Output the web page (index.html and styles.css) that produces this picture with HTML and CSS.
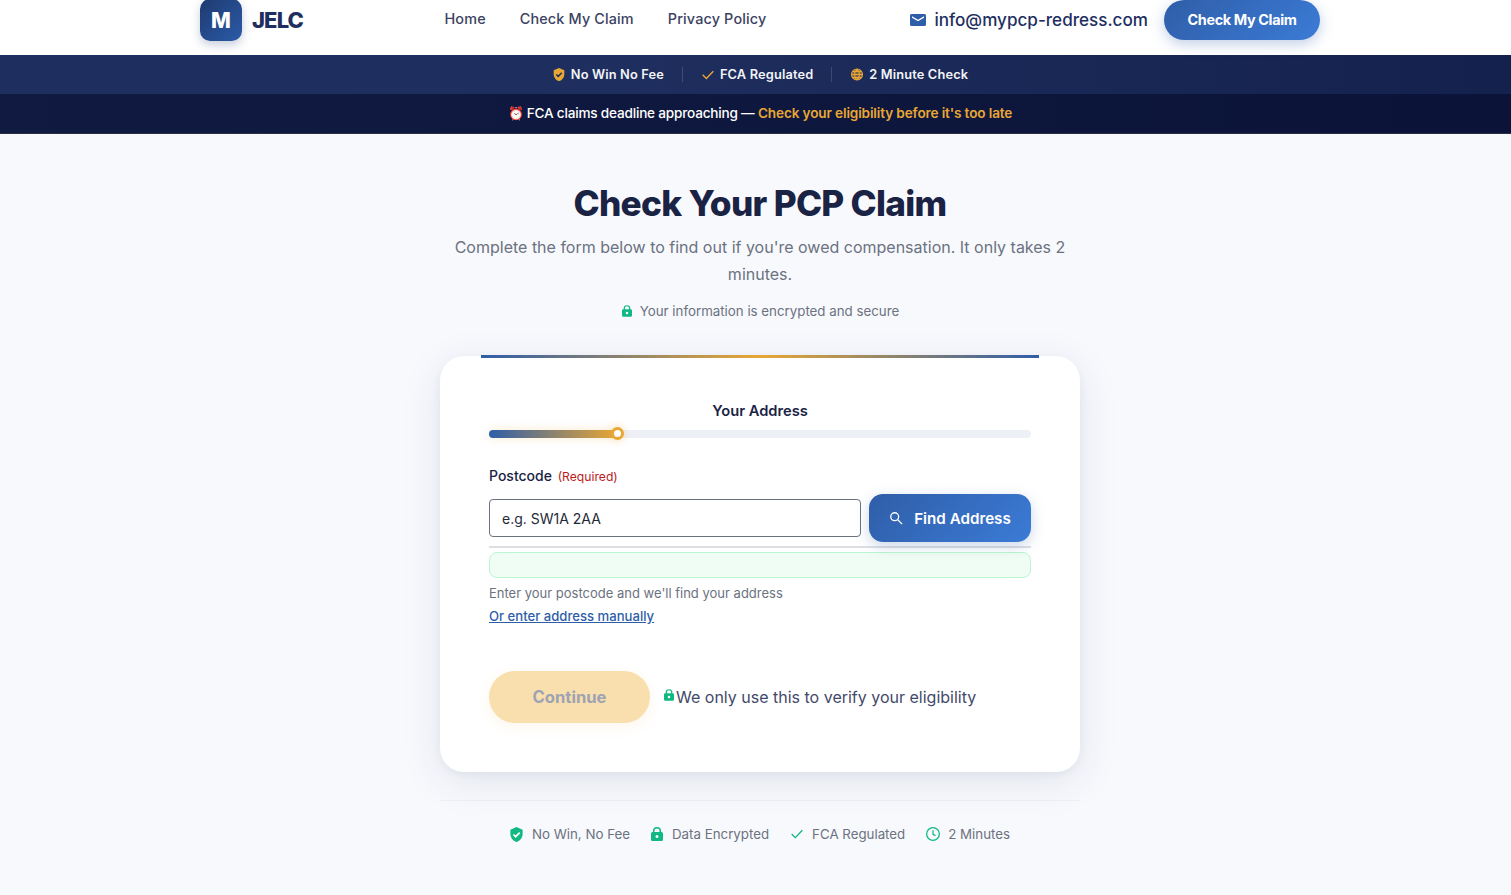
FILE: index.html

```html
<!DOCTYPE html>
<html lang="en">
<head>
  <meta charset="UTF-8">
  <title>Check Your PCP Claim</title>
  <link rel="stylesheet" href="styles.css">
</head>
<body>
  <header class="site-header">
    <div class="header-inner">
      <a class="brand" href="#">
        <span class="brand-mark">M</span>
        <span class="brand-name">JELC</span>
      </a>
      <nav class="main-nav">
        <a href="#">Home</a>
        <a href="#">Check My Claim</a>
        <a href="#">Privacy Policy</a>
      </nav>
      <div class="header-right">
        <a class="header-mail" href="#">
          <svg class="mail-icon" viewBox="0 0 16 12"><path d="M1.500 0h13A1.500 1.500 0 0 1 16 1.500v9a1.500 1.500 0 0 1-1.500 1.500h-13A1.500 1.500 0 0 1 0 10.500v-9A1.500 1.500 0 0 1 1.500 0zM2 2.200v1.500l6 3.600 6-3.600V2.200L8 5.700z" fill-rule="evenodd"/></svg>
          info@mypcp-redress.com
        </a>
        <a class="header-cta" href="#">Check My Claim</a>
      </div>
    </div>
  </header>

  <div class="trust-bar">
    <span class="trust-item">
      <svg class="trust-icon" viewBox="3 1 18 22"><path fill="#e8a735" d="M12 1 3 5v6c0 5.600 3.800 10.700 9 12 5.200-1.300 9-6.400 9-12V5z"/><path fill="none" stroke="#1e2d5c" stroke-width="2.500" d="m7.500 12 3.200 3.200 6-6"/></svg>
      No Win No Fee
    </span>
    <span class="trust-item">
      <svg class="trust-icon" viewBox="3 3 18 18"><path fill="none" stroke="#e8a735" stroke-width="2" d="m4 12.500 5.500 5.500L20 7"/></svg>
      FCA Regulated
    </span>
    <span class="trust-item">
      <svg class="trust-icon" viewBox="1 1 22 22" fill="none" stroke="#e8a735" stroke-width="2"><circle cx="12" cy="12" r="10" fill="#e8a735" fill-opacity=".45"/><path d="M2 12h20M12 2c-6 6-6 14 0 20M12 2c6 6 6 14 0 20M4 6.500h16M4 17.500h16"/></svg>
      2 Minute Check
    </span>
  </div>

  <div class="deadline-bar">
    <span class="alarm">⏰</span><span class="deadline-text">FCA claims deadline approaching — </span><strong>Check your eligibility before it's too late</strong>
  </div>

  <main class="page">
    <h1>Check Your PCP Claim</h1>
    <p class="lead">Complete the form below to find out if you're owed compensation. It only takes 2 minutes.</p>
    <p class="secure-note">
      <svg class="lock-icon" viewBox="0 0 12 14"><path d="M2 5V3.600a4 3.600 0 0 1 8 0V5h.500A1.500 1.500 0 0 1 12 6.500v6a1.500 1.500 0 0 1-1.500 1.500h-9A1.500 1.500 0 0 1 0 12.500v-6A1.500 1.500 0 0 1 1.500 5zm1.500 0h5V3.600a2.500 2.200 0 0 0-5 0zM6 8a1.500 1.500 0 1 0 0 3 1.500 1.500 0 0 0 0-3z" fill-rule="evenodd"/></svg>
      Your information is encrypted and secure
    </p>

    <section class="form-card">
      <h2 class="step-title">Your Address</h2>
      <div class="progress">
        <div class="progress-fill"></div>
      </div>

      <label class="field-label" for="postcode">Postcode <span class="required">(Required)</span></label>
      <div class="postcode-row">
        <input type="text" id="postcode" placeholder="e.g. SW1A 2AA">
        <button class="find-btn" type="button">
          <svg class="search-icon" viewBox="0 0 16 16" fill="none" stroke="#fff" stroke-width="1.500"><circle cx="6.500" cy="6.500" r="4.500"/><path d="m10 10 5 5"/></svg>
          Find Address
        </button>
      </div>
      <div class="rule"></div>
      <div class="status-box"></div>
      <p class="help">Enter your postcode and we'll find your address</p>
      <a class="manual-link" href="#">Or enter address manually</a>

      <div class="form-actions">
        <button class="continue-btn" type="button" disabled>Continue</button>
        <p class="privacy-note">
          <svg class="lock-icon small" viewBox="0 0 12 14"><path d="M2 5V3.600a4 3.600 0 0 1 8 0V5h.500A1.500 1.500 0 0 1 12 6.500v6a1.500 1.500 0 0 1-1.500 1.500h-9A1.500 1.500 0 0 1 0 12.500v-6A1.500 1.500 0 0 1 1.500 5zm1.500 0h5V3.600a2.500 2.200 0 0 0-5 0zM6 8a1.500 1.500 0 1 0 0 3 1.500 1.500 0 0 0 0-3z" fill-rule="evenodd"/></svg>We only use this to verify your eligibility
        </p>
      </div>
    </section>

    <div class="badges">
      <span class="badge">
        <svg class="badge-shield" viewBox="3 1 18 22"><path fill="#10b981" d="M12 1 3 5v6c0 5.600 3.800 10.700 9 12 5.200-1.300 9-6.400 9-12V5z"/><path fill="none" stroke="#fff" stroke-width="2.500" d="m7.500 12 3.200 3.200 6-6"/></svg>
        No Win, No Fee
      </span>
      <span class="badge">
        <svg class="badge-lock" viewBox="0 0 12 14"><path fill="#10b981" d="M2 5V3.600a4 3.600 0 0 1 8 0V5h.500A1.500 1.500 0 0 1 12 6.500v6a1.500 1.500 0 0 1-1.500 1.500h-9A1.500 1.500 0 0 1 0 12.500v-6A1.500 1.500 0 0 1 1.500 5zm1.500 0h5V3.600a2.500 2.200 0 0 0-5 0zM6 8a1.500 1.500 0 1 0 0 3 1.500 1.500 0 0 0 0-3z" fill-rule="evenodd"/></svg>
        Data Encrypted
      </span>
      <span class="badge">
        <svg class="badge-check" viewBox="3 5 18 15"><path fill="none" stroke="#10b981" stroke-width="2" d="m4 12.500 5.500 5.500L20 7"/></svg>
        FCA Regulated
      </span>
      <span class="badge">
        <svg class="badge-clock" viewBox="1 1 22 22" fill="none" stroke="#10b981" stroke-width="2"><circle cx="12" cy="12" r="10"/><path d="M12 6v6.500l4 2"/></svg>
        2 Minutes
      </span>
    </div>
  </main>
</body>
</html>
```

FILE: styles.css

```css
*, *::before, *::after { box-sizing: border-box; }
html, body { margin: 0; padding: 0; }
html { overflow: hidden; }
body {
  font-family: Inter, "Liberation Sans", sans-serif;
  background-color: #f8f9fd;
  color: #1a2344;
  width: 1520px;
  height: 895px;
}
a { text-decoration: none; color: inherit; }

.site-header {
  background-color: #fff;
  height: 55px;
}
.header-inner {
  width: 1120px;
  margin: 0 auto;
  display: flex;
  align-items: flex-start;
  height: 55px;
}
.brand {
  display: flex;
  align-items: center;
  gap: 10px;
  margin-top: -1px;
  width: 244.500px;
}
.brand-mark {
  width: 42px;
  height: 42px;
  border-radius: 10px;
  background: linear-gradient(135deg, #1e3a6f, #2b5ba8);
  box-shadow: 0 4px 10px rgba(30,58,111,0.25);
  color: #fff;
  font-weight: 800;
  font-size: 21px;
  display: flex;
  align-items: center;
  justify-content: center;
}
.brand-name {
  font-size: 22px;
  font-weight: 800;
  letter-spacing: -0.04em;
  color: #1e2f5f;
}
.main-nav {
  display: flex;
  gap: 34px;
  font-size: 14.400px;
  font-weight: 500;
  letter-spacing: 0.15px;
  color: #3b4262;
  line-height: 38px;
}
.header-right {
  margin-left: auto;
  display: flex;
  align-items: center;
  gap: 16px;
}
.header-mail {
  display: flex;
  align-items: center;
  gap: 8px;
  padding-bottom: 1px;
  font-size: 17.100px;
  font-weight: 500;
  color: #1e2f5f;
}
.mail-icon {
  width: 16px;
  height: 12px;
  fill: #2f5ea8;
}
.header-cta {
  width: 156px;
  height: 40px;
  padding-bottom: 1px;
  border-radius: 20px;
  background: linear-gradient(135deg, #2f5ea8, #3b7bd6);
  box-shadow: 0 4px 14px rgba(47,94,168,0.3);
  color: #fff;
  font-size: 14.400px;
  font-weight: 700;
  letter-spacing: -0.025em;
  display: flex;
  align-items: center;
  justify-content: center;
}

.trust-bar {
  height: 39px;
  background: linear-gradient(90deg, #1e2e5e, #1e2e5e 40%, #14214d);
  color: #f3f4f8;
  font-size: 12.800px;
  font-weight: 600;
  letter-spacing: 0.15px;
  display: flex;
  align-items: center;
  justify-content: center;
}
.trust-item {
  display: flex;
  align-items: center;
  gap: 6px;
  padding: 0 18px 0 19px;
  border-left: 1px solid rgba(255,255,255,0.15);
  height: 15px;
}
.trust-item:first-child { border-left: 0; }
.trust-icon {
  width: 12px;
  height: 13px;
}

.deadline-bar {
  height: 40px;
  padding-bottom: 2px;
  background: linear-gradient(90deg, #111b42, #0b1338);
  border-bottom: 1px solid #2a2f45;
  color: #fff;
  font-size: 13.600px;
  line-height: 20px;
  font-weight: 500;
  display: flex;
  align-items: center;
  justify-content: center;
  white-space: pre;
}
.deadline-text { letter-spacing: -0.015em; }
.deadline-bar strong {
  color: #e8a735;
  font-weight: 600;
  letter-spacing: -0.01em;
}
.alarm {
  font-size: 13px;
  margin-right: 3px;
}

.page {
  display: flex;
  flex-direction: column;
  align-items: center;
}
h1 {
  margin: 47px 0 0;
  font-size: 35.200px;
  line-height: 44px;
  font-weight: 800;
  letter-spacing: -0.02em;
  color: #1a2344;
}
.lead {
  margin: 9px 0 0;
  width: 640px;
  font-size: 16px;
  line-height: 27px;
  color: #6b7280;
  text-align: center;
}
.secure-note {
  margin: 13px 0 0 1px;
  font-size: 13.300px;
  line-height: 20px;
  color: #6b7280;
  display: flex;
  align-items: center;
  gap: 8px;
}
.lock-icon {
  width: 10px;
  height: 12px;
  fill: #10b981;
}

.form-card {
  position: relative;
  width: 640px;
  height: 416px;
  margin-top: 35px;
  padding: 46px 49px 0;
  background-color: #fff;
  border-radius: 24px;
  box-shadow: 0 10px 40px rgba(30,47,95,0.1), 0 2px 8px rgba(30,47,95,0.05);
}
.form-card::before {
  content: "";
  position: absolute;
  top: -1px;
  left: 41px;
  right: 41px;
  height: 3px;
  background: linear-gradient(90deg, #2f5ea8, #e8a735, #2f5ea8);
}
.step-title {
  margin: 0;
  font-size: 14.700px;
  line-height: 18px;
  font-weight: 600;
  text-align: center;
  color: #1a2344;
}
.progress {
  height: 8px;
  margin-top: 10px;
  border-radius: 4px;
  background-color: #eef0f7;
}
.progress-fill {
  position: relative;
  width: 128px;
  height: 8px;
  border-radius: 4px;
  background: linear-gradient(90deg, #2f5ea8, #e8a735);
  box-shadow: 0 0 10px rgba(232,167,53,0.25);
}
.progress-fill::after {
  content: "";
  position: absolute;
  right: -7px;
  top: -3px;
  width: 13px;
  height: 13px;
  border-radius: 50%;
  background-color: #fff;
  border: 3px solid #e8a735;
  box-shadow: 0 0 8px rgba(232,167,53,0.4);
}
.field-label {
  display: block;
  margin-top: 29px;
  font-size: 14px;
  line-height: 17px;
  font-weight: 500;
  color: #1a2344;
}
.required {
  margin-left: 2px;
  font-size: 12.160px;
  font-weight: 400;
  color: #b91c1c;
}
.postcode-row {
  display: flex;
  align-items: center;
  gap: 8px;
  margin-top: 9px;
}
.postcode-row input {
  flex: 1;
  min-width: 0;
  height: 38px;
  padding: 0 12px;
  border: 1px solid #6b7280;
  border-radius: 4px;
  font-family: inherit;
  font-size: 14px;
  color: #1a2344;
}
.postcode-row input::placeholder {
  color: #1f2937;
  opacity: 1;
}
.find-btn {
  width: 162px;
  height: 48px;
  border: 0;
  border-radius: 14px;
  background: linear-gradient(135deg, #2f5ea8, #3b7bd6);
  box-shadow: 0 4px 14px rgba(47,94,168,0.25);
  color: #fff;
  font-family: inherit;
  font-size: 15.200px;
  font-weight: 600;
  display: flex;
  align-items: center;
  justify-content: center;
  gap: 11px;
}
.search-icon {
  width: 14px;
  height: 14px;
}
.rule {
  height: 2px;
  margin-top: 4px;
  background-color: #dedfe3;
}
.status-box {
  height: 26px;
  margin-top: 4px;
  background-color: #f0fdf4;
  border: 1px solid #bbf7d0;
  border-radius: 8px;
}
.help {
  margin: 7px 0 0;
  font-size: 13px;
  line-height: 17px;
  color: #6b7280;
}
.manual-link {
  display: inline-block;
  margin-top: 6px;
  font-size: 13.120px;
  line-height: 17px;
  font-weight: 500;
  color: #2f5ea8;
  text-decoration: underline;
}
.form-actions {
  display: flex;
  align-items: center;
  gap: 14px;
  margin-top: 46px;
}
.continue-btn {
  width: 161px;
  height: 52px;
  border: 0;
  border-radius: 26px;
  background-color: #f8dfad;
  box-shadow: 0 4px 14px rgba(232,167,53,0.1);
  color: #9ea3b4;
  font-family: inherit;
  font-size: 16.640px;
  font-weight: 700;
}
.privacy-note {
  margin: 0;
  font-size: 16px;
  color: #42496a;
  display: flex;
  align-items: flex-start;
  gap: 2px;
}
.lock-icon.small { margin-top: 2px; }

.badges {
  width: 640px;
  margin-top: 28px;
  padding-top: 25px;
  border-top: 1px solid #eef0f5;
  display: flex;
  justify-content: center;
  gap: 21px;
  font-size: 13.300px;
  color: #6b7280;
}
.badge {
  display: flex;
  align-items: center;
  gap: 9px;
}
.badge-shield { width: 13px; height: 15px; }
.badge-lock { width: 12px; height: 14px; }
.badge-check { width: 12px; height: 10px; margin-left: 1px; }
.badge-clock { width: 14px; height: 14px; margin-right: -1px; }
```
